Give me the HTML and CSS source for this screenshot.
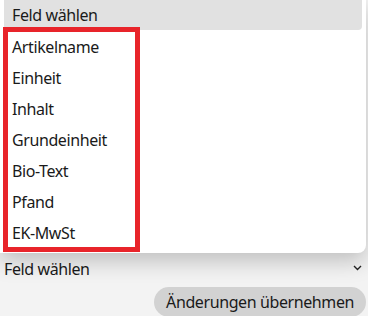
FILE: index.html
```html
<!DOCTYPE html>
<html lang="de">
<head>
  <meta charset="UTF-8" />
  <meta name="viewport" content="width=device-width, initial-scale=1" />
  <title>Feld wählen</title>
  <link rel="stylesheet" href="styles.css">
</head>
<body>
  <div class="popup">
    <div class="option selected">Feld wählen</div>
    <ul class="field-list">
      <li>Artikelname</li>
      <li>Einheit</li>
      <li>Inhalt</li>
      <li>Grundeinheit</li>
      <li>Bio-Text</li>
      <li>Pfand</li>
      <li>EK-MwSt</li>
    </ul>
  </div>

  <div class="select-row">
    <span>Feld wählen</span>
    <svg class="chevron" width="9" height="6" viewBox="0 0 9 6">
      <path d="M1 1 L4.5 4.5 L8 1" fill="none" stroke="#222" stroke-width="1.4" />
    </svg>
  </div>

  <div class="actions">
    <button type="button" class="apply-btn">Änderungen übernehmen</button>
  </div>
</body>
</html>
```

FILE: styles.css
```css
body {
  font-family: 'Noto Sans', sans-serif;
  font-size: 16px;
  letter-spacing: -0.4px;
  color: #1a1a1a;
  margin: 0;
  background: #f3f3f3;
  overflow: hidden;
}

.popup {
  width: 366px;
  height: 253px;
  background: #fff;
  border-radius: 0 0 8px 0;
  box-shadow: 0 8px 22px rgba(0, 0, 0, 0.22);
  position: relative;
  z-index: 1;
}

.option {
  margin: 0 4px;
  height: 30px;
  line-height: 30px;
  padding-left: 8px;
}

.selected {
  background: #e1e1e1;
  border-radius: 0 0 4px 4px;
}

.field-list {
  list-style: none;
  margin: -3px 0 0 3px;
  padding: 0 0 0 4px;
  width: 123px;
  height: 215px;
  border: 5px solid #e8242a;
}

.field-list li {
  height: 31px;
  line-height: 30px;
}

.select-row {
  display: flex;
  align-items: center;
  justify-content: space-between;
  height: 32px;
  padding: 0 6px 0 4px;
}

.chevron {
  margin-top: -3px;
}

.actions {
  display: flex;
  justify-content: flex-end;
  padding-right: 2px;
  margin-top: 2px;
}

.apply-btn {
  font-family: inherit;
  font-size: 16px;
  letter-spacing: -0.4px;
  color: #1a1a1a;
  background: #d2d2d2;
  border: none;
  border-radius: 15px;
  height: 30px;
  padding: 0 12px;
}
```
